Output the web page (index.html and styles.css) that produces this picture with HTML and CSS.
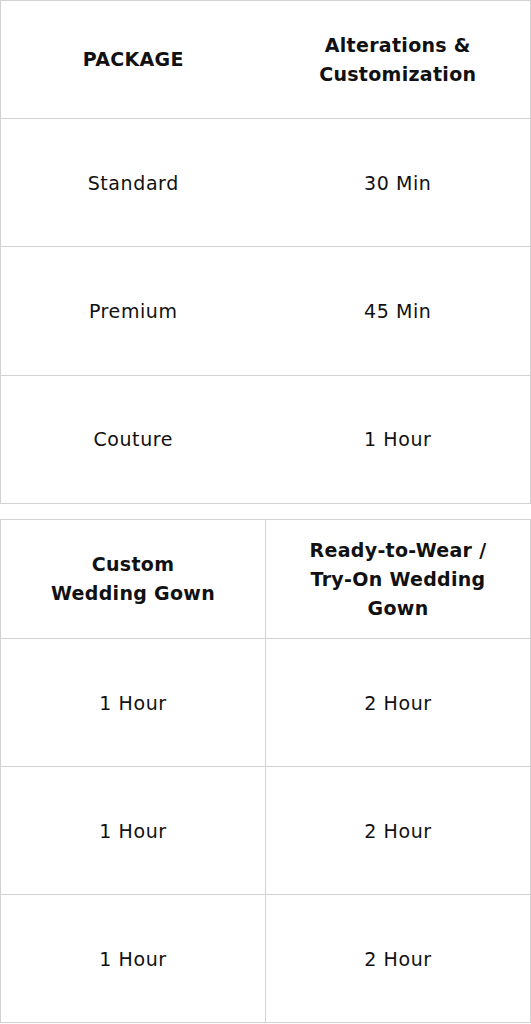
FILE: index.html
```html
<!DOCTYPE html>
<html>
<head>
<meta charset="utf-8">
<link rel="stylesheet" href="styles.css">
</head>
<body>
<div class="page">
  <table class="grid grid-open">
    <tr class="head">
      <th>PACKAGE</th>
      <th>Alterations &amp;<br>Customization</th>
    </tr>
    <tr><td>Standard</td><td>30 Min</td></tr>
    <tr><td>Premium</td><td>45 Min</td></tr>
    <tr><td>Couture</td><td>1 Hour</td></tr>
  </table>
  <table class="grid grid-split">
    <tr class="head">
      <th>Custom<br>Wedding Gown</th>
      <th>Ready-to-Wear /<br>Try-On Wedding<br>Gown</th>
    </tr>
    <tr><td>1 Hour</td><td>2 Hour</td></tr>
    <tr><td>1 Hour</td><td>2 Hour</td></tr>
    <tr><td>1 Hour</td><td>2 Hour</td></tr>
  </table>
</div>
</body>
</html>
```
FILE: styles.css
```css
html, body {
  margin: 0;
  padding: 0;
  background: #ffffff;
}
.page {
  display: flex;
  flex-direction: column;
  gap: 15px;
  width: 531px;
  font-family: "DejaVu Sans", sans-serif;
  color: #111111;
}
.grid {
  width: 531px;
  border-collapse: collapse;
  table-layout: fixed;
}
.grid th, .grid td {
  border: 1px solid #d2d2d2;
  text-align: center;
  vertical-align: middle;
  padding: 0;
  width: 50%;
}
.grid-open th, .grid-open td {
  border-left: none;
  border-right: none;
}
.grid-open th:first-child, .grid-open td:first-child {
  border-left: 1px solid #d2d2d2;
}
.grid-open th:last-child, .grid-open td:last-child {
  border-right: 1px solid #d2d2d2;
}
.grid th {
  font-weight: 700;
  font-size: 19px;
  letter-spacing: 0.3px;
  line-height: 29px;
  height: 117px;
}
.grid-split th {
  height: 118px;
}
.grid td {
  font-weight: 400;
  font-size: 19px;
  letter-spacing: 0.6px;
  height: 127.4px;
}
.grid-split td {
  height: 127px;
}
```
